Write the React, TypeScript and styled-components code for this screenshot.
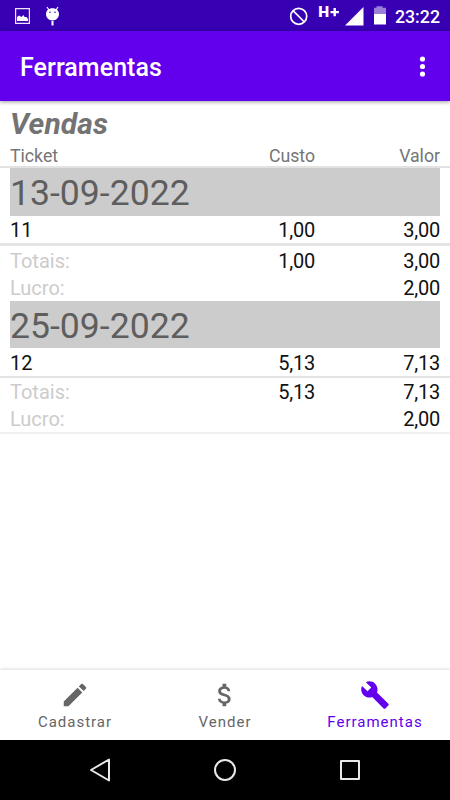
import React from "react";
import styled, { createGlobalStyle } from "styled-components";

const GlobalStyle = createGlobalStyle`
  * { box-sizing: border-box; }
  html, body { margin: 0; padding: 0; background: #fff; }
  body { font-family: Roboto, "Liberation Sans", sans-serif; overflow: hidden; }
  svg { display: block; flex: none; }
`;

const Screen = styled.div`
  width: 450px;
  height: 800px;
  display: flex;
  flex-direction: column;
  background: #fff;
`;

const StatusBar = styled.header`
  height: 31px;
  flex: none;
  display: flex;
  justify-content: space-between;
  background: #3700b3;
  color: #fff;
`;

const Clock = styled.span`
  width: 60px;
  padding: 1px 10px 0 0;
  text-align: right;
  white-space: nowrap;
  font-size: 17.8px;
  font-weight: 500;
  line-height: 31px;
`;

const AppBar = styled.div`
  height: 70px;
  flex: none;
  display: flex;
  align-items: center;
  justify-content: space-between;
  padding: 2px 12px 0 20px;
  background: #6200ee;
  color: #fff;
  z-index: 1;
  box-shadow: 0 1px 4px rgba(0, 0, 0, 0.4);
`;

const AppTitle = styled.h1`
  margin: 0;
  padding-top: 1px;
  font-size: 25px;
  font-weight: 500;
  line-height: 30px;
  letter-spacing: 0.05px;
`;

const MenuButton = styled.button`
  width: 30px;
  height: 30px;
  padding: 0;
  border: 0;
  background: none;
  color: inherit;
`;

const Report = styled.main`
  flex: 1;
  min-height: 0;
`;

const Heading = styled.h2`
  margin: 0;
  padding: 5px 10px 0;
  height: 43px;
  font-size: 30px;
  font-weight: 700;
  font-style: italic;
  line-height: 36px;
  letter-spacing: 0.15px;
  color: #737373;
`;

const Columns = styled.div<{ $height: number; $size?: number; $color?: string }>`
  display: grid;
  grid-template-columns: 180px 125px 125px;
  padding: 0 10px;
  height: ${(p) => p.$height}px;
  line-height: ${(p) => p.$height + 2}px;
  font-size: ${(p) => p.$size ?? 20}px;
  color: ${(p) => p.$color ?? "#111"};
`;

const Cell = styled.span<{ $muted?: boolean }>`
  color: ${(p) => (p.$muted ? "#ccc" : "inherit")};
`;

const ColumnName = styled.span`
  text-align: right;
`;

const Amount = styled.span`
  text-align: right;
  letter-spacing: -0.25px;
`;

const Divider = styled.div<{ $height: number; $color: string }>`
  height: ${(p) => p.$height}px;
  background: ${(p) => p.$color};
`;

const DateBand = styled.h3<{ $height: number }>`
  margin: 0 10px;
  height: ${(p) => p.$height}px;
  line-height: 51px;
  font-size: 35.6px;
  font-weight: 400;
  color: #5e5e5e;
  background: #ccc;
`;

const Tabs = styled.nav`
  height: 70px;
  flex: none;
  display: grid;
  grid-template-columns: repeat(3, 1fr);
  background: #fff;
  z-index: 1;
  box-shadow: 0 -1px 3px rgba(0, 0, 0, 0.14);
`;

const Tab = styled.div<{ $active?: boolean }>`
  display: flex;
  flex-direction: column;
  align-items: center;
  padding-top: 10px;
  color: ${(p) => (p.$active ? "#6200ee" : "#666")};
`;

const TabLabel = styled.span`
  margin-top: 3px;
  font-size: 15px;
  line-height: 18px;
  letter-spacing: 1px;
`;

const SystemNav = styled.footer`
  height: 60px;
  flex: none;
  background: #000;
`;

const sales = [
  { date: "13-09-2022", ticket: "11", cost: "1,00", value: "3,00", profit: "2,00", band: 48, row: 27, rule: 3, total: 28, gain: 27, end: 0 },
  { date: "25-09-2022", ticket: "12", cost: "5,13", value: "7,13", profit: "2,00", band: 47, row: 28, rule: 2, total: 27, gain: 27, end: 2 },
];

const StatusIcons = () => (
  <svg width="390" height="31" viewBox="0 0 390 31" fill="#fff">
    <path fillRule="evenodd" d="M15 8h15v16H15zM16.2 9.2v13.6h12.6V9.2z" opacity=".9" />
    <path d="M17 21v-4l2-1.500 2.500 1.500 2-2 1 2h2l1.500 2v2z" />
    <path d="M47 7l2 3M58 7l-2 3" stroke="#fff" strokeWidth="1.2" />
    <path fillRule="evenodd" d="M52.500 8.200c4 0 6.500 2.300 6.500 5.800s-2.500 6.500-6.500 6.500S46 17.500 46 14s2.500-5.800 6.500-5.800zM50 11.500a.8.8 0 1 0 0 1.600.8.8 0 0 0 0-1.600zM55 11.500a.8.8 0 1 0 0 1.600.8.8 0 0 0 0-1.600z" />
    <path d="M51.500 21h2v4.500h-2z" />
    <g fill="none" stroke="#fff" strokeWidth="1.700">
      <circle cx="298.700" cy="16.300" r="8" />
      <path d="M293 10.600l11.400 11.400" />
    </g>
    <text x="318.300" y="17" fontFamily="Roboto" fontWeight="900" fontSize="15.500">H</text>
    <path d="M330.500 10.900h3V8h2.400v2.900h3v2.400h-3v2.900h-2.400v-2.900h-3z" />
    <path d="M345 25.500L363.500 7v18.500z" />
    <path d="M374 7.800h2.500V6.300h6v1.500H386V14h-12z" opacity=".5" />
    <path d="M374 14h12v10.500h-12z" />
  </svg>
);

export default function App() {
  return (
    <>
      <GlobalStyle />
      <Screen>
        <StatusBar>
          <StatusIcons />
          <Clock>23:22</Clock>
        </StatusBar>
        <AppBar>
          <AppTitle>Ferramentas</AppTitle>
          <MenuButton aria-label="Menu">
            <svg width="30" height="30" viewBox="0 0 30 30" fill="currentColor">
              <circle cx="14.500" cy="7" r="2.600" />
              <circle cx="14.500" cy="14.500" r="2.600" />
              <circle cx="14.500" cy="22" r="2.600" />
            </svg>
          </MenuButton>
        </AppBar>
        <Report>
          <Heading>Vendas</Heading>
          <Columns $height={22} $size={17.7} $color="#757575">
            <Cell>Ticket</Cell>
            <ColumnName>Custo</ColumnName>
            <ColumnName>Valor</ColumnName>
          </Columns>
          <Divider $height={2} $color="#e2e2e2" />
          {sales.map((s) => (
            <section key={s.date}>
              <DateBand $height={s.band}>{s.date}</DateBand>
              <Columns $height={s.row}>
                <Cell>{s.ticket}</Cell>
                <Amount>{s.cost}</Amount>
                <Amount>{s.value}</Amount>
              </Columns>
              <Divider $height={s.rule} $color="#e4e4e4" />
              <Columns $height={s.total}>
                <Cell $muted>Totais:</Cell>
                <Amount>{s.cost}</Amount>
                <Amount>{s.value}</Amount>
              </Columns>
              <Columns $height={s.gain}>
                <Cell $muted>Lucro:</Cell>
                <Amount />
                <Amount>{s.profit}</Amount>
              </Columns>
              <Divider $height={s.end} $color="#f0f0f0" />
            </section>
          ))}
        </Report>
        <Tabs>
          <Tab>
            <svg width="30" height="30" viewBox="0 0 24 24" fill="currentColor">
              <path d="M3 17.250V21h3.750L17.810 9.940l-3.750-3.750L3 17.250zM20.710 7.040a1 1 0 0 0 0-1.410l-2.340-2.340a1 1 0 0 0-1.410 0l-1.830 1.830 3.750 3.750 1.830-1.830z" />
            </svg>
            <TabLabel>Cadastrar</TabLabel>
          </Tab>
          <Tab>
            <svg width="30" height="30" viewBox="0 0 24 24" fill="currentColor">
              <path d="M11.800 10.900c-2.270-.59-3-1.200-3-2.150 0-1.090 1.010-1.850 2.700-1.850 1.780 0 2.440.85 2.500 2.100h2.210c-.07-1.720-1.120-3.300-3.210-3.810V3h-3v2.160c-1.940.42-3.500 1.680-3.500 3.610 0 2.310 1.910 3.460 4.700 4.130 2.500.6 3 1.480 3 2.410 0 .69-.49 1.790-2.700 1.790-2.060 0-2.870-.92-2.980-2.100h-2.200c.12 2.190 1.760 3.420 3.680 3.830V21h3v-2.150c1.950-.37 3.500-1.500 3.500-3.550 0-2.840-2.430-3.810-4.700-4.400z" />
            </svg>
            <TabLabel>Vender</TabLabel>
          </Tab>
          <Tab $active>
            <svg width="30" height="30" viewBox="0 0 24 24" fill="currentColor">
              <path d="M22.700 19l-9.100-9.100c.9-2.300.4-5-1.500-6.900-2-2-5-2.400-7.400-1.300L9 6 6 9 1.600 4.700C.4 7.100.9 10.100 2.900 12.100c1.900 1.900 4.600 2.400 6.900 1.500l9.100 9.100c.4.4 1 .4 1.400 0l2.300-2.300c.5-.4.5-1.100.1-1.400z" />
            </svg>
            <TabLabel>Ferramentas</TabLabel>
          </Tab>
        </Tabs>
        <SystemNav>
          <svg width="450" height="60" viewBox="0 0 450 60" fill="none" stroke="#e8e8e8" strokeWidth="2" strokeLinejoin="round">
            <path d="M91 30L109 19.500v21z" />
            <circle cx="225" cy="30" r="10" />
            <rect x="341" y="21" width="18" height="18" />
          </svg>
        </SystemNav>
      </Screen>
    </>
  );
}
